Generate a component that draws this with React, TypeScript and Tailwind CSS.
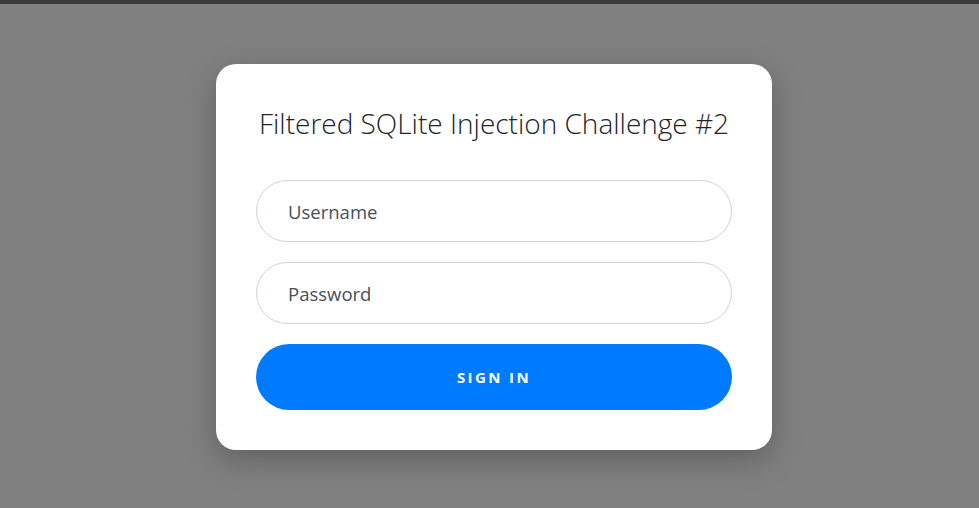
export default function App() {
  return (
    <div className="min-h-[508px] bg-[#808080] font-['Open_Sans',sans-serif]">
      {/* Top strip */}
      <div className="h-1 bg-[#3b3b3b]" />

      <div className="flex justify-center pt-[60px] pl-[9px]">
        <div className="w-[556px] rounded-[20px] bg-white px-10 pt-[38px] pb-10 shadow-[0_10px_30px_rgba(0,0,0,0.25)]">
          <h1 className="-mx-4 whitespace-nowrap text-center text-[28px] leading-[42px] font-light text-[#212529]">
            Filtered SQLite Injection Challenge #2
          </h1>

          <form className="mt-[36px] flex flex-col gap-5" onSubmit={(e) => e.preventDefault()}>
            <input
              type="text"
              placeholder="Username"
              className="h-[62px] w-full rounded-full border border-[#ced4da] bg-white pl-[31px] pr-8 text-[18.5px] text-[#495057] placeholder:text-[#495057] outline-none"
            />
            <input
              type="password"
              placeholder="Password"
              className="h-[62px] w-full rounded-full border border-[#ced4da] bg-white pl-[31px] pr-8 text-[18.5px] text-[#495057] placeholder:text-[#495057] outline-none"
            />
            <button
              type="submit"
              className="h-[66px] w-full rounded-full bg-[#007bff] text-[15px] font-bold uppercase tracking-[2.4px] text-white"
            >
              Sign in
            </button>
          </form>
        </div>
      </div>
    </div>
  )
}
